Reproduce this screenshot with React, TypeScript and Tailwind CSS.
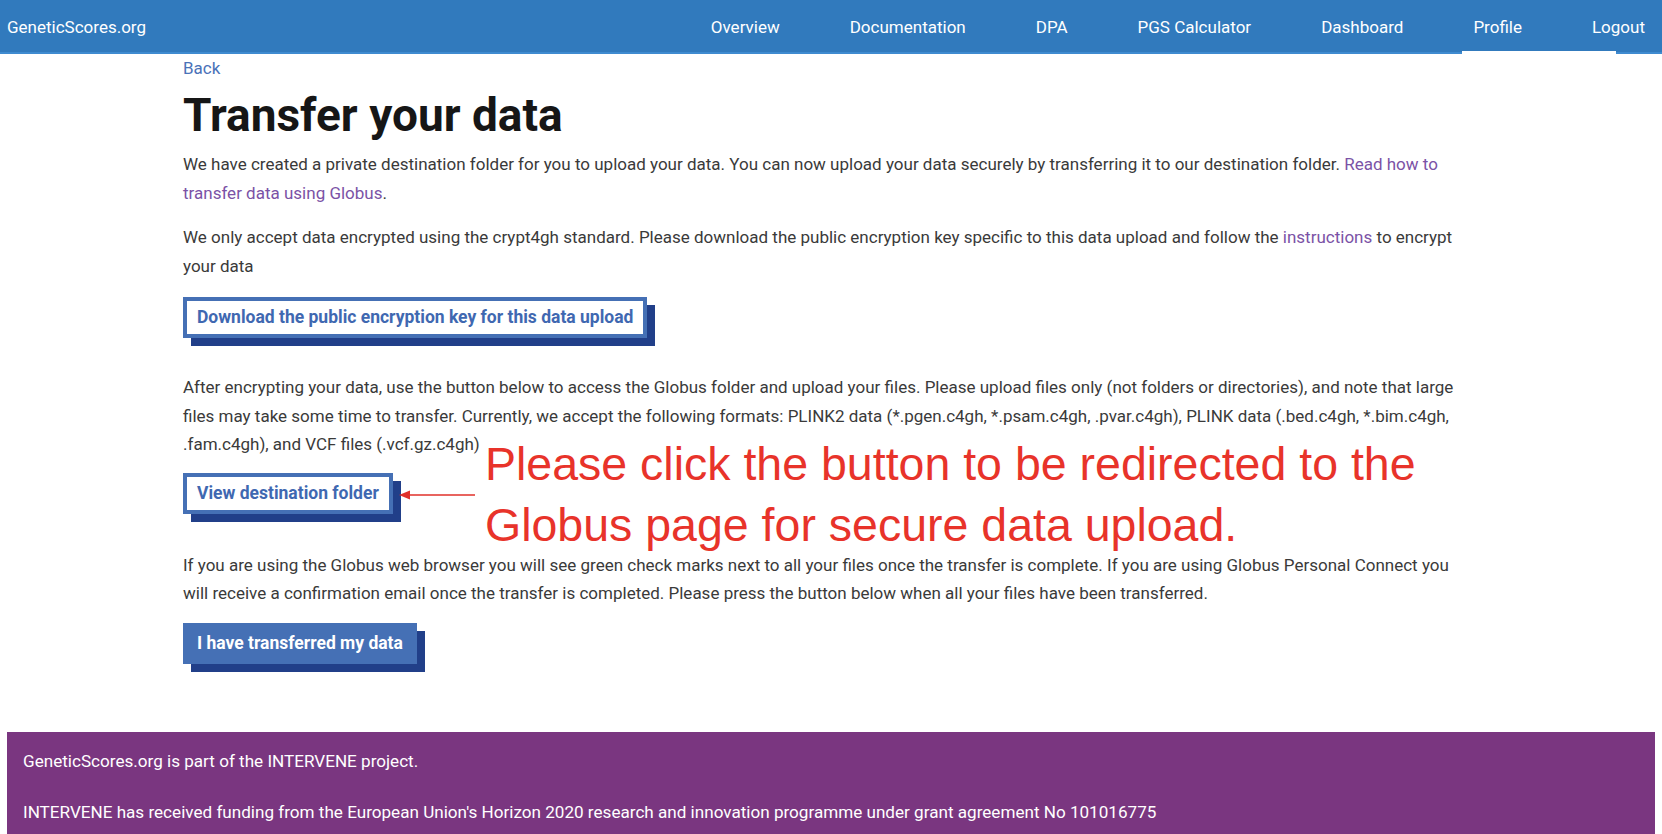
import React from "react";

const navItems = ["Overview", "Documentation", "DPA", "PGS Calculator", "Dashboard", "Profile", "Logout"];

function ShadowButton({ children, filled = false }: { children: React.ReactNode; filled?: boolean }) {
  return (
    <div className="flex">
      <a
        className={
          "inline-block border-4 border-[#4570b5] px-[10px] text-[17.5px] font-bold leading-[33px] shadow-[8px_8px_0_#213f89] " +
          (filled ? "bg-[#4570b5] text-white" : "bg-white text-[#3f68b1]")
        }
      >
        {children}
      </a>
    </div>
  );
}

export default function App() {
  return (
    <div className="min-h-[834px] bg-white font-['Roboto',sans-serif]">
      {/* Header */}
      <header className="relative flex h-[54px] items-center border-b-2 border-[#3f8bd0] bg-[#317abd] pt-[3px] text-[17px] text-white">
        <a className="pl-[7px]">GeneticScores.org</a>
        <nav className="ml-auto flex gap-[70px] pr-[17px]">
          {navItems.map((n) => (
            <a key={n}>{n}</a>
          ))}
        </nav>
        <div className="absolute bottom-[-2px] right-[46px] h-[3px] w-[154px] bg-white" />
      </header>

      {/* Main */}
      <main className="relative mx-auto w-[1296px] pt-[2px] text-[17px] leading-[28.5px] text-[#3a3a3a]">
        <a className="block leading-[24px] text-[#4a72b8]">Back</a>
        <h1 className="mt-[8px] text-[46px] font-bold leading-[54px] text-[#161616]">Transfer your data</h1>
        <p className="mt-[8px] mb-[16px]">
          We have created a private destination folder for you to upload your data. You can now upload your data securely by transferring it to our destination folder.{" "}
          <a className="text-[#7b52a6]">Read how to</a>
          <br />
          <a className="text-[#7b52a6]">transfer data using Globus</a>.
        </p>
        <p className="mb-[17px]">
          We only accept data encrypted using the crypt4gh standard. Please download the public encryption key specific to this data upload and follow the{" "}
          <a className="text-[#7b52a6]">instructions</a> to encrypt
          <br />
          your data
        </p>
        <ShadowButton>Download the public encryption key for this data upload</ShadowButton>
        <p className="mt-[35px] mb-[14px]">
          After encrypting your data, use the button below to access the Globus folder and upload your files. Please upload files only (not folders or directories), and note that large
          <br />
          files may take some time to transfer. Currently, we accept the following formats: PLINK2 data (*.pgen.c4gh, *.psam.c4gh, .pvar.c4gh), PLINK data (.bed.c4gh, *.bim.c4gh,
          <br />
          .fam.c4gh), and VCF files (.vcf.gz.c4gh)
        </p>
        <ShadowButton>View destination folder</ShadowButton>
        <p className="mt-[37px] mb-[15px]">
          If you are using the Globus web browser you will see green check marks next to all your files once the transfer is complete. If you are using Globus Personal Connect you
          <br />
          will receive a confirmation email once the transfer is completed. Please press the button below when all your files have been transferred.
        </p>
        <ShadowButton filled>I have transferred my data</ShadowButton>

        {/* Annotation overlay */}
        <svg className="absolute left-[216px] top-[433px]" width="78" height="16" viewBox="0 0 78 16">
          <line x1="8" y1="8" x2="76" y2="8" stroke="#e0302a" strokeWidth="1.6" />
          <polygon points="0,8 11,3.5 11,12.5" fill="#e0302a" />
        </svg>
        <div className="absolute left-[302px] top-[380px] font-['Liberation_Sans',Arial,sans-serif] text-[46.5px] leading-[61px] text-[#e8332a]">
          Please click the button to be redirected to the
          <br />
          Globus page for secure data upload.
        </div>
      </main>

      {/* Footer */}
      <footer className="mx-[7px] mt-[68px] bg-[#7a3680] px-[16px] pt-[17px] pb-[20px] text-[17.1px] leading-[24px] text-white">
        <p className="mb-[27px]">GeneticScores.org is part of the INTERVENE project.</p>
        <p>INTERVENE has received funding from the European Union's Horizon 2020 research and innovation programme under grant agreement No 101016775</p>
      </footer>
    </div>
  );
}
